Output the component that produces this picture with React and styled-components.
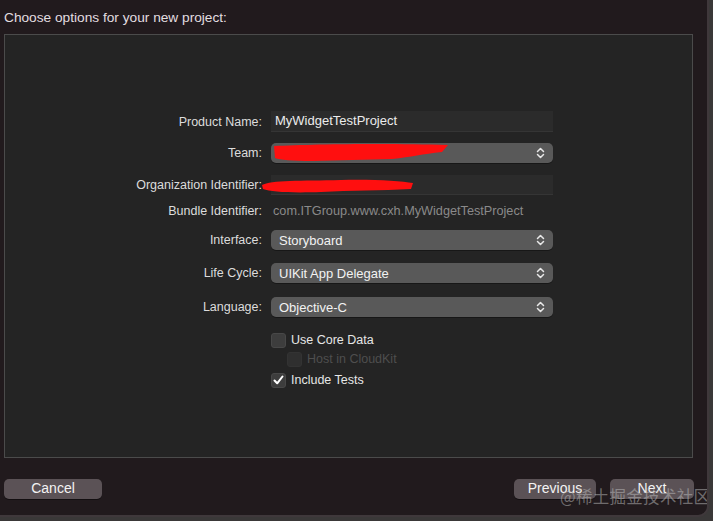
import React from 'react'
import styled, { createGlobalStyle } from 'styled-components'

const GlobalStyle = createGlobalStyle`
  body {
    margin: 0;
    background: #3a3838;
    font-family: "Liberation Sans", Arial, sans-serif;
  }
`;

const Window = styled.div`
  position: relative;
  width: 709px;
  height: 517px;
  background: #211a1d;
  border-right: 2px solid #3f383b;
  border-bottom: 2px solid #3f383b;
  border-bottom-right-radius: 11px;
  display: flex;
  flex-direction: column;
  padding: 0 0 0 4px;
  box-sizing: border-box;
  overflow: hidden;
`;

const Title = styled.div`
  height: 34px;
  line-height: 36px;
  font-size: 13.7px;
  color: #e3dee0;
`;

const Panel = styled.div`
  width: 689px;
  height: 424px;
  box-sizing: border-box;
  background: #242424;
  border: 1.5px solid #4b4b4b;
  padding-top: 76px;
  display: flex;
  flex-direction: column;
`;

const Row = styled.div`
  display: grid;
  grid-template-columns: 257px 282px;
  column-gap: 9px;
  align-items: center;
  height: ${p => p.$h || 20}px;
  margin-top: ${p => p.$mt || 0}px;
`;

const Label = styled.div`
  text-align: right;
  font-size: 12.5px;
  color: #dcdcdc;
  white-space: nowrap;
`;

const FieldWrap = styled.div`
  position: relative;
  height: 100%;
`;

const TextField = styled.div`
  height: 100%;
  box-sizing: border-box;
  background: #2b2b2b;
  border-bottom: 1px solid #353535;
  padding-left: 4px;
  font-size: 13px;
  line-height: 20px;
  color: #ececec;
`;

const Plain = styled.div`
  font-size: 12.7px;
  color: #8a8a8a;
  padding-left: 2px;
`;

const Popup = styled.div`
  height: 100%;
  box-sizing: border-box;
  background: #595959;
  border-radius: 5px;
  padding: 0 8px;
  display: flex;
  align-items: center;
  justify-content: space-between;
  font-size: 13px;
  color: #f2f2f2;
  box-shadow: 0 1px 0 rgba(0,0,0,0.35);
`;

const Scribble = styled.svg`
  position: absolute;
  left: ${p => p.$left}px;
  top: ${p => p.$top}px;
  pointer-events: none;
`;

const CheckRow = styled.div`
  display: flex;
  align-items: center;
  gap: 5px;
  padding-left: ${p => p.$indent || 0}px;
  font-size: 12.5px;
  color: ${p => (p.$disabled ? '#4e4e4e' : '#e6e6e6')};
`;

const Box = styled.div`
  width: 13px;
  height: 13px;
  border-radius: 3px;
  background: ${p => (p.$disabled ? '#2f2f2f' : '#3d3d3d')};
  border: 1px solid ${p => (p.$disabled ? '#333' : '#484848')};
  display: flex;
  align-items: center;
  justify-content: center;
`;

const Footer = styled.div`
  display: flex;
  justify-content: space-between;
  align-items: center;
  padding: 21px 13px 0 0;
`;

const ButtonGroup = styled.div`
  display: flex;
  gap: 14px;
`;

const Button = styled.div`
  width: ${p => p.$w}px;
  height: 20px;
  border-radius: 5px;
  background: #5b5256;
  color: #f3f3f3;
  font-size: 14px;
  line-height: 18px;
  text-align: center;
  box-shadow: 0 1px 0 rgba(0,0,0,0.4);
`;

const Watermark = styled.div`
  position: absolute;
  left: 560px;
  top: 484px;
  font-family: "Noto Sans CJK SC", sans-serif;
  font-size: 16.5px;
  white-space: nowrap;
  color: rgba(190, 190, 190, 0.5);
  letter-spacing: 0.3px;
  pointer-events: none;
`;

function Chevrons() {
  return (
    <svg width="9" height="12" viewBox="0 0 9 12" fill="none" stroke="#e8e8e8" strokeWidth="1.5" strokeLinecap="round" strokeLinejoin="round">
      <path d="M1.5 4.5 L4.5 1.5 L7.5 4.5" />
      <path d="M1.5 7.5 L4.5 10.5 L7.5 7.5" />
    </svg>
  );
}

function Check() {
  return (
    <svg width="11" height="10" viewBox="0 0 11 10" fill="none" stroke="#ffffff" strokeWidth="2" strokeLinecap="round" strokeLinejoin="round">
      <path d="M1.5 5.5 L4.2 8.3 L9.5 1.5" />
    </svg>
  );
}

const Select = ({ value }) => (
  <Popup>
    <span>{value}</span>
    <Chevrons />
  </Popup>
);

export default function App() {
  return (
    <>
      <GlobalStyle />
      <Window>
        <Title>Choose options for your new project:</Title>
        <Panel>
          <Row>
            <Label>Product Name:</Label>
            <TextField>MyWidgetTestProject</TextField>
          </Row>
          <Row $mt={12}>
            <Label>Team:</Label>
            <FieldWrap>
              <Select value="" />
              <Scribble $left={1} $top={-1} width="178" height="21" viewBox="0 0 178 21">
                <path d="M2 4 C40 2 120 1 176 3 L170 10 C150 12 140 15 120 17 L40 19 C20 19 8 18 3 16 Z" fill="#ff0f0f" />
              </Scribble>
            </FieldWrap>
          </Row>
          <Row $mt={12}>
            <Label>Organization Identifier:</Label>
            <FieldWrap>
              <TextField />
              <Scribble $left={-10} $top={3} width="155" height="16" viewBox="0 0 155 16">
                <path d="M1 7 C10 2 40 3 80 2 C110 1 140 3 152 5 L150 11 C120 13 90 12 60 14 C30 15 10 14 2 11 Z" fill="#ff0f0f" />
              </Scribble>
            </FieldWrap>
          </Row>
          <Row $mt={6}>
            <Label>Bundle Identifier:</Label>
            <Plain>com.ITGroup.www.cxh.MyWidgetTestProject</Plain>
          </Row>
          <Row $mt={9}>
            <Label>Interface:</Label>
            <Select value="Storyboard" />
          </Row>
          <Row $mt={13}>
            <Label>Life Cycle:</Label>
            <Select value="UIKit App Delegate" />
          </Row>
          <Row $mt={14}>
            <Label>Language:</Label>
            <Select value="Objective-C" />
          </Row>
          <Row $mt={14} $h={18}>
            <span />
            <CheckRow>
              <Box />
              Use Core Data
            </CheckRow>
          </Row>
          <Row $mt={1} $h={18}>
            <span />
            <CheckRow $indent={16} $disabled>
              <Box $disabled />
              Host in CloudKit
            </CheckRow>
          </Row>
          <Row $mt={3} $h={18}>
            <span />
            <CheckRow>
              <Box><Check /></Box>
              Include Tests
            </CheckRow>
          </Row>
        </Panel>
        <Footer>
          <Button $w={98}>Cancel</Button>
          <ButtonGroup>
            <Button $w={82}>Previous</Button>
            <Button $w={84}>Next</Button>
          </ButtonGroup>
        </Footer>
        <Watermark>@稀土掘金技术社区</Watermark>
      </Window>
    </>
  );
}
